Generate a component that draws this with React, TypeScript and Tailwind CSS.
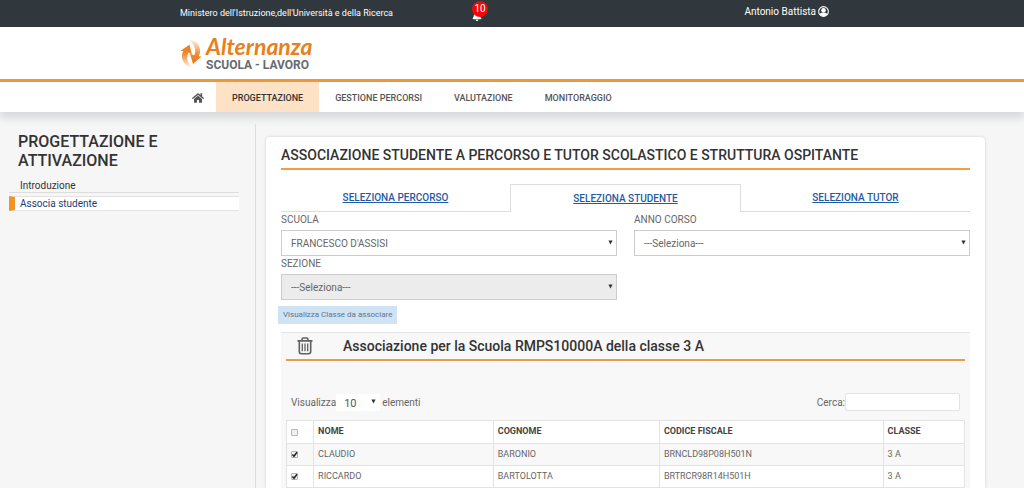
import React from "react";
import { FaHome, FaBell } from "react-icons/fa";

const students = [
  { nome: "CLAUDIO", cognome: "BARONIO", cf: "BRNCLD98P08H501N", classe: "3 A" },
  { nome: "RICCARDO", cognome: "BARTOLOTTA", cf: "BRTRCR98R14H501H", classe: "3 A" },
];

function Arrow({ className }: { className: string }) {
  return (
    <svg viewBox="0 0 5 5" className={"pointer-events-none absolute size-[5px] " + className} aria-hidden="true">
      <path d="M0.4 0.5H4.6L2.5 4.6Z" fill="#333" />
    </svg>
  );
}

function Field({ id, label, value, disabled }: { id: string; label: string; value: string; disabled?: boolean }) {
  return (
    <div>
      <label htmlFor={id} className="block h-[18px] text-[10px] leading-4 text-[#666]">
        {label}
      </label>
      <div className="relative">
        <select
          id={id}
          disabled={disabled}
          className="block h-[26px] w-full appearance-none border border-[#ccc] bg-white pl-[9px] text-[10px] text-[#666] disabled:bg-[#ececec] disabled:opacity-100"
        >
          <option>{value}</option>
        </select>
        <Arrow className="right-1 top-[10px]" />
      </div>
    </div>
  );
}

function Tick({ label, checked }: { label: string; checked?: boolean }) {
  return (
    <span className="relative block size-[7px]">
      <input
        type="checkbox"
        aria-label={label}
        defaultChecked={checked}
        className="peer block size-[7px] appearance-none rounded-[1px] border border-[#b5b5b5] bg-[#f0f0f0]"
      />
      <svg viewBox="0 0 7 7" className="pointer-events-none absolute inset-0 hidden size-[7px] peer-checked:block" aria-hidden="true">
        <path d="M1.4 3.4L3 5.2L6 1.2" fill="none" stroke="#222" strokeWidth="1.5" />
      </svg>
    </span>
  );
}

function LogoMark() {
  return (
    <svg viewBox="0 0 22 34" className="h-[34px] w-[22px]" aria-hidden="true">
      <defs>
        <linearGradient id="fadeUp" x1="0" y1="0" x2="0" y2="1">
          <stop offset="0" stopColor="#e97b17" />
          <stop offset="0.4" stopColor="#ec8a34" />
          <stop offset="1" stopColor="#fdf0e3" />
        </linearGradient>
        <linearGradient id="fadeDown" x1="0" y1="1" x2="0" y2="0">
          <stop offset="0" stopColor="#e97b17" />
          <stop offset="0.4" stopColor="#ec8a34" />
          <stop offset="1" stopColor="#fdf0e3" />
        </linearGradient>
      </defs>
      <path d="M0.5 14.8L9.5 8.8L12 18.5L8.3 16.6C6 21.5 7.5 28 12 31.2C4 30.5 -0.5 22 3.3 15Z" fill="url(#fadeUp)" />
      <path d="M21.5 20.5L13 28L10 17.8L14.3 19.3C16.5 14.5 14.5 7 8.5 4.2C18 3.5 22.5 12.5 18.8 20.3Z" fill="url(#fadeDown)" />
    </svg>
  );
}

function UserIcon() {
  return (
    <svg viewBox="0 0 12 12" className="size-[11px]" aria-hidden="true">
      <circle cx="6" cy="6" r="5.3" fill="none" stroke="#fff" strokeWidth="1.2" />
      <circle cx="6" cy="4.7" r="2.5" fill="#fff" />
      <path d="M1.9 9.3C2.5 7.9 3.6 7.4 4.5 7.2H7.5C8.4 7.4 9.5 7.9 10.1 9.3A5.3 5.3 0 0 1 1.9 9.3Z" fill="#fff" />
    </svg>
  );
}

function TrashIcon() {
  return (
    <svg viewBox="0 0 16 18" className="h-[18px] w-4" fill="none" stroke="#606060" strokeWidth="1.6" aria-hidden="true">
      <path d="M0.5 3.9H15.5M5 3.6V2.4Q5 1 6.4 1H9.6Q11 1 11 2.4V3.6M2.3 4V14.6Q2.3 16.8 4.5 16.8H11.5Q13.7 16.8 13.7 14.6V4" />
      <path d="M5.3 6.5V14.3M8 6.5V14.3M10.7 6.5V14.3" strokeWidth="1.3" />
    </svg>
  );
}

const navItem = "flex h-full items-center px-4 pt-[3px] text-[9px] font-medium";
const tab = "flex flex-1 h-7 items-center justify-center text-[10px] font-medium text-[#1f5ba3] underline";
const cell = "border border-[#e3e3e3] px-1 text-left";

export default function App() {
  return (
    <div className="flex min-h-screen flex-col bg-[#f6f6f6] font-['Roboto','Liberation_Sans',sans-serif] text-[#666]">
      <header>
        <div className="bg-[#30373d] text-white">
          <div className="mx-auto flex h-[27px] max-w-[664px] items-center pr-[15px]">
            <span className="w-[45%] pt-px text-[9px]">Ministero dell'Istruzione,dell'Università e della Ricerca</span>
            <button type="button" aria-label="Notifiche" className="relative mt-1 block">
              <FaBell className="size-[10px]" />
              <span className="absolute -top-[10px] left-0 flex size-4 items-center justify-center rounded-full bg-[#f00808] text-[10px]">
                10
              </span>
            </button>
            <a href="#profilo" className="ml-auto flex items-center gap-0.5 pb-1 text-[10px]">
              Antonio Battista <UserIcon />
            </a>
          </div>
        </div>
        <div className="border-b-[3px] border-[#ee9534] bg-white">
          <a href="#home" className="mx-auto flex h-[52px] max-w-[664px] items-center gap-1">
            <LogoMark />
            <span className="flex flex-col">
              <span className="font-['Lato',sans-serif] text-[23px] font-bold italic leading-[25px] text-[#e8801c]">Alternanza</span>
              <span className="text-[12px] font-bold leading-[13px] text-[#666b70]">SCUOLA - LAVORO</span>
            </span>
          </a>
        </div>
        <nav className="bg-white shadow-[0_6px_8px_#d6d8dc]">
          <div className="mx-auto flex h-[30px] max-w-[664px] items-center pl-3">
            <a href="#home" aria-label="Home" className="pr-3 pt-0.5 text-[#555]">
              <FaHome className="size-3" />
            </a>
            <a href="#progettazione" className={navItem + " bg-[#fde2c6] text-[#333]"}>PROGETTAZIONE</a>
            <a href="#gestione" className={navItem + " text-[#555]"}>GESTIONE PERCORSI</a>
            <a href="#valutazione" className={navItem + " text-[#555]"}>VALUTAZIONE</a>
            <a href="#monitoraggio" className={navItem + " text-[#555]"}>MONITORAGGIO</a>
          </div>
        </nav>
      </header>

      <div className="flex grow pt-3">
        <aside className="w-1/4 border-r border-[#ddd] pl-[9px] pr-4 pt-2">
          <h2 className="pl-[9px] text-[16px] font-medium leading-[19px] text-[#333]">
            PROGETTAZIONE E
            <br />
            ATTIVAZIONE
          </h2>
          <ul className="pt-2 text-[10px]">
            <li className="mb-[3px] border-b border-[#ddd] pl-[11px]">
              <a href="#introduzione" className="block h-[14px] leading-4 text-[#333]">Introduzione</a>
            </li>
            <li className="border-y border-l-[6px] border-y-[#e3e3e3] border-l-[#f39323] bg-white pl-[5px]">
              <a href="#associa" className="block h-[13px] leading-[14px] text-[#1d3b70]">Associa studente</a>
            </li>
          </ul>
        </aside>

        <main className="flex w-3/4 flex-col pl-[10px] pr-[39px] pt-[13px]">
          <section className="grow rounded-t-sm bg-white px-[15px] shadow-[0_0_3px_#ccc]">
            <h1 className="h-[33px] border-b-2 border-[#f0a03c] pt-1 text-[14px] font-medium leading-7 text-[#333]">
              ASSOCIAZIONE STUDENTE A PERCORSO E TUTOR SCOLASTICO E STRUTTURA OSPITANTE
            </h1>
            <div className="mt-[14px] flex">
              <a href="#percorso" className={tab + " border-b border-[#ddd]"}>SELEZIONA PERCORSO</a>
              <a href="#studente" className={tab + " border-x border-t border-[#ddd]"}>SELEZIONA STUDENTE</a>
              <a href="#tutor" className={tab + " border-b border-[#ddd]"}>SELEZIONA TUTOR</a>
            </div>
            <div className="grid grid-cols-2 gap-x-[17px]">
              <Field id="scuola" label="SCUOLA" value="FRANCESCO D'ASSISI" />
              <Field id="anno" label="ANNO CORSO" value="---Seleziona---" />
              <Field id="sezione" label="SEZIONE" value="---Seleziona---" disabled />
            </div>
            <button type="button" className="-ml-[3px] mt-[6px] block h-[18px] bg-[#cfe3f5] px-[5px] text-[8px] text-[#60758c]">
              Visualizza Classe da associare
            </button>

            <div className="mt-2 border-t border-[#e5e5e5] bg-[#f8f8f8] px-[5px]">
              <div className="flex h-[28px] items-center border-b-2 border-[#e3a04a] pl-[11px]">
                <button type="button" aria-label="Elimina"><TrashIcon /></button>
                <h2 className="pl-[30px] text-[14px] font-medium text-[#333]">Associazione per la Scuola RMPS10000A della classe 3 A</h2>
              </div>
              <div className="flex items-end justify-between px-[5px] pb-[9px] pt-8 text-[10px]">
                <div className="flex items-center">
                  <label htmlFor="righe">Visualizza</label>
                  <div className="relative">
                    <select id="righe" className="block h-[17px] w-[44px] appearance-none bg-white pl-2 pt-0.5 text-[11px] text-[#555]">
                      <option>10</option>
                    </select>
                    <Arrow className="right-1 top-[5px]" />
                  </div>
                  <label htmlFor="righe" className="pl-0.5">elementi</label>
                </div>
                <label className="flex items-center">
                  Cerca:
                  <input type="search" className="h-[18px] w-[115px] rounded-[2px] border border-[#e3e3e3] bg-white px-1" />
                </label>
              </div>
              <table className="w-full table-fixed border-collapse bg-white text-[9px]">
                <colgroup>
                  <col className="w-[4%]" />
                  <col className="w-[26.5%]" />
                  <col className="w-[24.5%]" />
                  <col className="w-[33%]" />
                  <col className="w-[12%]" />
                </colgroup>
                <thead>
                  <tr className="h-[23px] text-[#444]">
                    <th className={cell}><Tick label="Seleziona tutti" /></th>
                    <th className={cell}>NOME</th>
                    <th className={cell}>COGNOME</th>
                    <th className={cell}>CODICE FISCALE</th>
                    <th className={cell}>CLASSE</th>
                  </tr>
                </thead>
                <tbody>
                  {students.map((s) => (
                    <tr key={s.cf} className="h-[22px] odd:bg-[#f8f8f8]">
                      <td className={cell}><Tick label={s.nome + " " + s.cognome} checked /></td>
                      <td className={cell}>{s.nome}</td>
                      <td className={cell}>{s.cognome}</td>
                      <td className={cell}>{s.cf}</td>
                      <td className={cell}>{s.classe}</td>
                    </tr>
                  ))}
                </tbody>
              </table>
            </div>
          </section>
        </main>
      </div>
    </div>
  );
}
